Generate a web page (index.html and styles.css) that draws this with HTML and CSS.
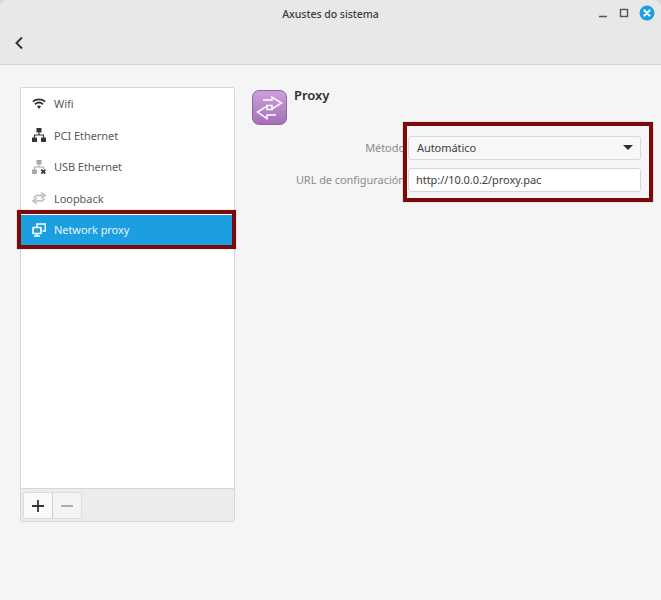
FILE: index.html
```html
<!DOCTYPE html>
<html lang="gl">
<head>
<meta charset="utf-8">
<title>Axustes do sistema</title>
<link rel="stylesheet" href="styles.css">
</head>
<body>
<div class="window">
  <header class="header">
    <div class="titlebar">
      <span class="title">Axustes do sistema</span>
      <div class="controls">
        <svg class="ctl" width="12" height="12" viewBox="0 0 12 12"><path d="M2 9.500h8" stroke="#555" stroke-width="1.400"/></svg>
        <svg class="ctl" width="12" height="12" viewBox="0 0 12 12"><rect x="2.500" y="2.500" width="7" height="7" fill="none" stroke="#555" stroke-width="1.400"/></svg>
        <svg class="ctl" width="16" height="16" viewBox="0 0 16 16"><circle cx="8" cy="8" r="7.500" fill="#1c9fe0"/><path d="M5.400 5.400l5.200 5.200M10.600 5.400l-5.200 5.200" stroke="#fff" stroke-width="2.100" stroke-linecap="round"/></svg>
      </div>
    </div>
    <div class="navbar">
      <svg width="12" height="14" viewBox="0 0 12 14"><path d="M9 1.500L3.500 7 9 12.500" fill="none" stroke="#333" stroke-width="2"/></svg>
    </div>
  </header>
  <main class="content">
    <aside class="sidebar">
      <ul class="list">
        <li class="item">
          <svg class="ico" width="14" height="16" viewBox="0 0 14 16"><path d="M.8 5.600C4.200 2.600 9.800 2.600 13.200 5.600" fill="none" stroke="#333" stroke-width="1.800"/><path d="M3 8.200c2.400-2 5.600-2 8 0" fill="none" stroke="#333" stroke-width="1.800"/><path d="M4.800 10.100c1.400-.9 3-.9 4.400 0L7 13z" fill="#333"/></svg>
          <span>Wifi</span>
        </li>
        <li class="item">
          <svg class="ico" width="14" height="16" viewBox="0 0 14 16"><g fill="#333"><rect x="4.500" y="1" width="5" height="4.500"/><rect x="0" y="10.500" width="5" height="4.500"/><rect x="9" y="10.500" width="5" height="4.500"/></g><path d="M7 5.500v3M2.500 10.500V8h9v2.500" fill="none" stroke="#333" stroke-width="1.200"/></svg>
          <span>PCI Ethernet</span>
        </li>
        <li class="item">
          <svg class="ico" width="14" height="16" viewBox="0 0 14 16"><g fill="#a8a8a8"><rect x="4.500" y="1" width="5" height="4.500"/><rect x="0" y="10.500" width="5" height="4.500"/></g><path d="M7 5.500v3M2.500 10.500V8h9v2" fill="none" stroke="#a8a8a8" stroke-width="1.200"/><path d="M9.300 10.600l4 4M13.300 10.600l-4 4" stroke="#333" stroke-width="1.700"/></svg>
          <span>USB Ethernet</span>
        </li>
        <li class="item">
          <svg class="ico" width="14" height="16" viewBox="0 0 14 16"><path d="M1.500 8L4 5.500H11M9 2.500L13 5.500L9 8.500M12.500 8.500L10 11H3M5 8L1 11L5 14" fill="none" stroke="#b8b8b8" stroke-width="1.500"/></svg>
          <span>Loopback</span>
        </li>
        <li class="item selected">
          <svg class="ico" width="14" height="16" viewBox="0 0 14 16"><path d="M5 5V2h8.300v7H10.500" fill="none" stroke="#fff" stroke-width="1.500"/><rect x="1" y="5.500" width="8" height="6" rx=".5" fill="none" stroke="#fff" stroke-width="1.600"/><path d="M2 14h6M5 11.500V14" stroke="#fff" stroke-width="1.600"/></svg>
          <span>Network proxy</span>
        </li>
      </ul>
      <div class="toolbar">
        <button class="tool active" type="button"><svg width="14" height="14" viewBox="0 0 14 14"><path d="M7 1v12M1 7h12" stroke="#333" stroke-width="1.800"/></svg></button><button class="tool" type="button"><svg width="14" height="14" viewBox="0 0 14 14"><path d="M1 7h12" stroke="#a5a5a5" stroke-width="1.800"/></svg></button>
      </div>
    </aside>
    <section class="panel">
      <div class="panel-head">
        <div class="app-icon">
          <svg width="35" height="35" viewBox="0 0 35 35"><path d="M14 15.500H20V19L29.500 13L20 7V10H11M21 19.500H15V16L5.500 22L15 28.500V25H24" fill="none" stroke="#fff" stroke-width="1.500"/></svg>
        </div>
        <h1 class="panel-title">Proxy</h1>
      </div>
      <div class="form">
        <label class="lbl">Método</label>
        <div class="combo"><span>Automático</span><i class="arrow"></i></div>
        <label class="lbl">URL de configuración</label>
        <div class="entry">http://10.0.0.2/proxy.pac</div>
      </div>
    </section>
  </main>
  <div class="mark mark-item"></div>
  <div class="mark mark-form"></div>
</div>
</body>
</html>
```
FILE: styles.css
```css
* { box-sizing: border-box; }
html, body { margin: 0; padding: 0; }
body { width: 661px; height: 600px; background: #d8d8d8; font-family: "Noto Sans", "Open Sans", sans-serif; font-size: 11px; letter-spacing: -.06px; color: #444; overflow: hidden; }
.window { position: relative; width: 661px; height: 600px; background: #f5f5f5; border-radius: 8px 8px 0 0; overflow: hidden; display: flex; flex-direction: column; }
.header { height: 65px; background: #e8e8e8; border-bottom: 1px solid #d3d3d3; flex: none; }
.titlebar { position: relative; height: 27px; display: flex; align-items: center; justify-content: center; }
.title { font-size: 10.6px; font-weight: 500; color: #3c3c3c; }
.controls { position: absolute; right: 6px; top: 5px; display: flex; align-items: center; gap: 9px; }
.ctl { display: block; }
.navbar { height: 37px; padding: 9px 0 0 13px; }
.navbar svg { display: block; }
.content { flex: 1; display: flex; padding: 22px 20px 0; gap: 17px; align-items: flex-start; }
.sidebar { width: 215px; height: 435px; flex: none; background: #fff; border: 1px solid #d6d6d6; border-radius: 2px; display: flex; flex-direction: column; }
.list { list-style: none; margin: 0; padding: 0; flex: 1; }
.item { height: 31.5px; padding: 0 0 1px 11px; display: flex; align-items: center; gap: 8px; color: #5a5a5a; }
.item:first-child { height: 32px; }
.selected { background: #1c9fe0; color: #e3f4fd; }
.ico { flex: none; display: block; }
.toolbar { height: 33px; flex: none; background: #ececec; border-top: 1px solid #d6d6d6; padding: 3px 0 0 2px; display: flex; align-items: flex-start; }
.tool { width: 29px; height: 27px; padding: 0; background: #f4f4f4; border: 1px solid #dcdcdc; border-left: 0; border-radius: 0 3px 3px 0; display: flex; align-items: center; justify-content: center; }
.tool.active { width: 30px; background: #fafafa; border-left: 1px solid #dcdcdc; border-radius: 3px 0 0 3px; border-right-color: #cfcfcf; }
.panel { flex: 1; min-width: 0; display: flex; flex-direction: column; }
.panel-head { display: flex; align-items: flex-start; gap: 7px; height: 49px; }
.app-icon { width: 35px; height: 35px; margin-top: 3px; border-radius: 7px; border: 1px solid #8b6a99; background: linear-gradient(#cc9fdf, #a66fb9); overflow: hidden; }
.app-icon svg { display: block; margin: -1px; }
.panel-title { margin: -1px 0 0; font-size: 13px; font-weight: 600; line-height: 18px; color: #2f2f2f; }
.form { display: grid; grid-template-columns: 156px 233px; column-gap: 0; row-gap: 8px; align-items: center; }
.lbl { justify-self: end; padding: 0 3px 2px 0; color: #8c8c8c; }
.combo { height: 24px; background: #f8f8f8; border: 1px solid #dadada; border-radius: 3px; padding: 0 7px 2px 8px; display: flex; align-items: center; justify-content: space-between; color: #3c3c3c; }
.arrow { width: 0; height: 0; border-left: 5px solid transparent; border-right: 5px solid transparent; border-top: 5px solid #2b2b2b; margin: 1px 0 0; }
.entry { height: 24px; background: #fff; border: 1px solid #d6d6d6; border-radius: 3px; padding: 0 7px 1px; display: flex; align-items: center; color: #3c3c3c; }
.mark { position: absolute; border: 4px solid #7c0a0a; box-shadow: 0 0 1px rgba(124,10,10,.5); pointer-events: none; }
.mark-item { left: 17px; top: 210px; width: 219px; height: 39px; }
.mark-form { left: 403px; top: 122px; width: 250px; height: 80px; }
```
